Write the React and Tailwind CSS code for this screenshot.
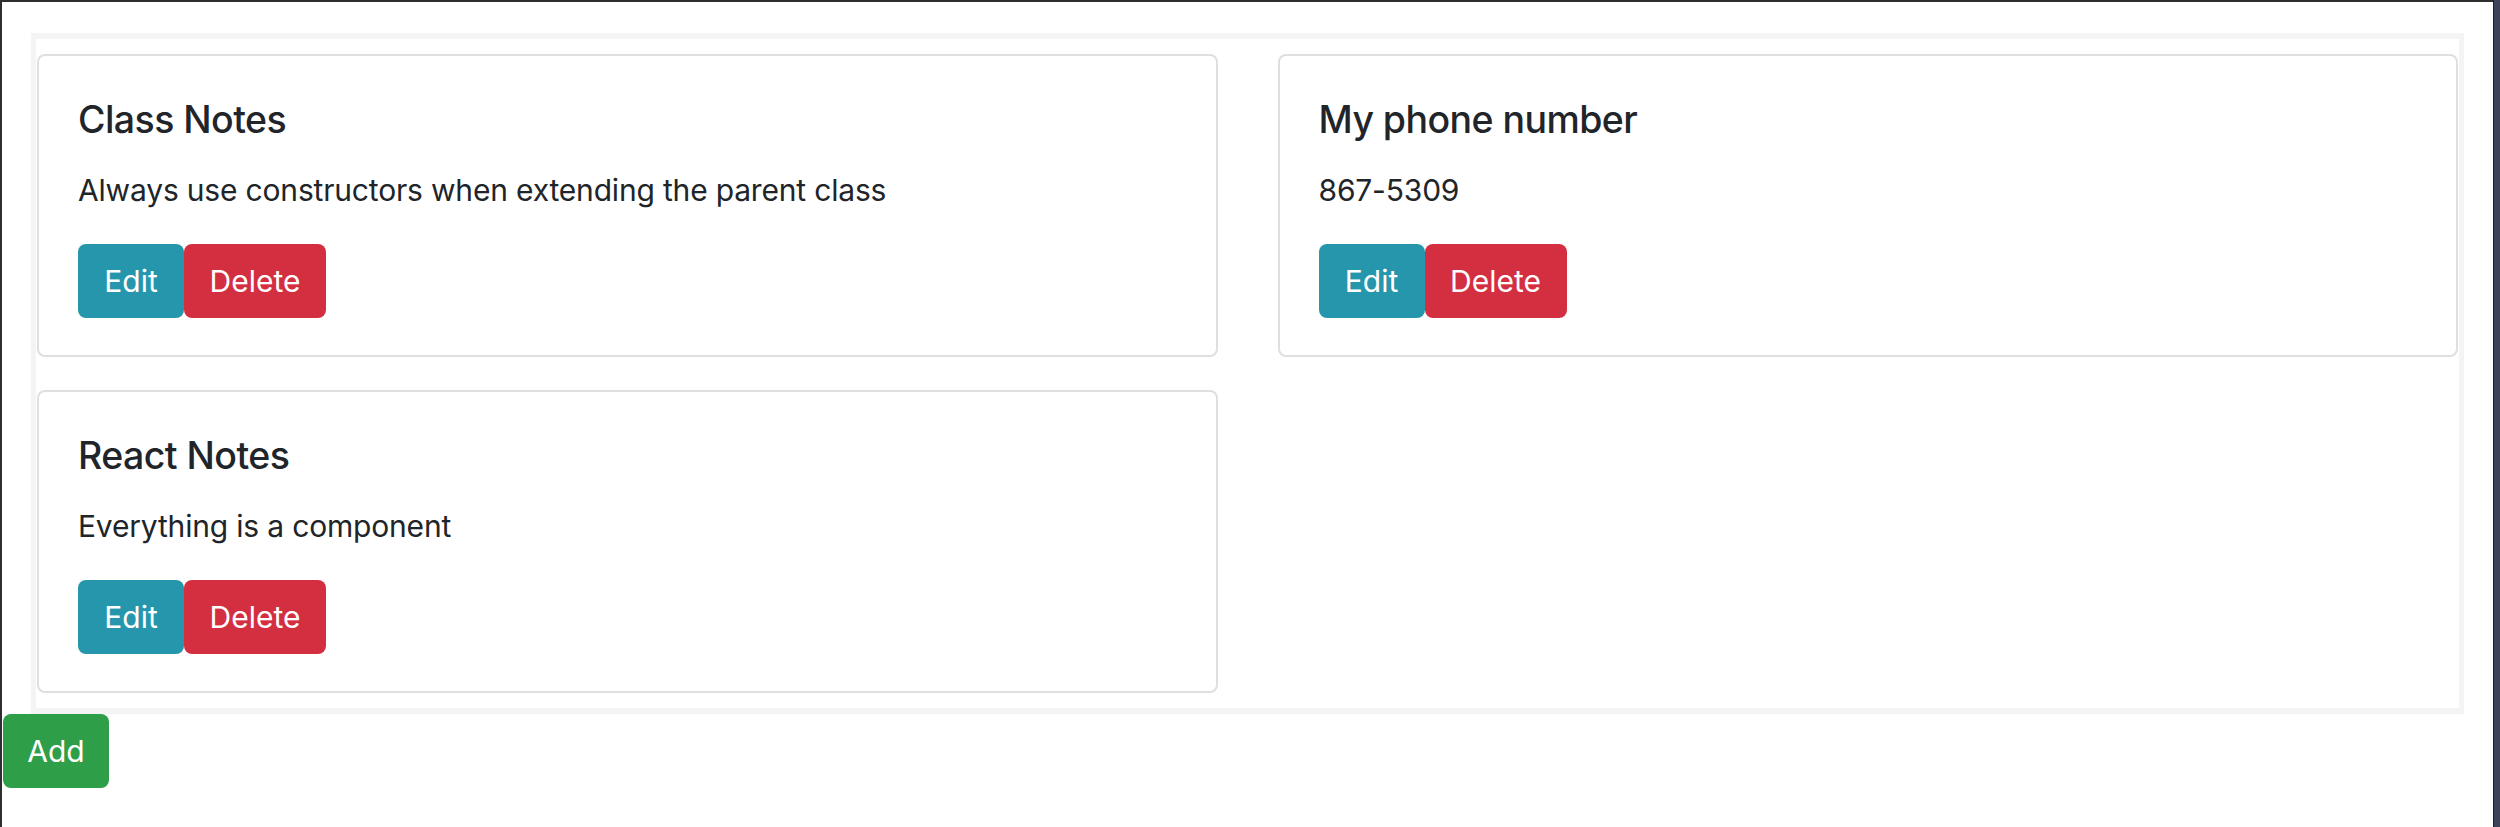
import React from 'react';

const notes = [
  { id: 1, title: 'Class Notes', body: 'Always use constructors when extending the parent class' },
  { id: 2, title: 'My phone number', body: '867-5309' },
  { id: 3, title: 'React Notes', body: 'Everything is a component' },
];

function NoteCard({ note }) {
  return (
    <div className="h-[303px] rounded-[8px] border-2 border-[#dfdfdf] bg-white px-[39px] pt-[41px]">
      <h5 className="text-[37.5px] leading-[1.2] font-medium tracking-[-0.015em] text-[#212529]">{note.title}</h5>
      <p className="mt-[26px] text-[30px] leading-[1.5] tracking-[-0.006em] text-[#212529]">{note.body}</p>
      <div className="mt-[31px] flex">
        <button className="flex h-[74px] w-[106px] items-center justify-center rounded-[8px] bg-[#2596ac] text-[30px] text-white">
          Edit
        </button>
        <button className="flex h-[74px] w-[142px] items-center justify-center rounded-[8px] bg-[#d42e41] text-[30px] text-white">
          Delete
        </button>
      </div>
    </div>
  );
}

export default function App() {
  return (
    <div
      className="flex min-h-screen bg-white"
      style={{ fontFamily: 'Inter, "Noto Sans", sans-serif' }}
    >
      <div className="flex-1 border-t-2 border-l-2 border-[#2e2e2e]">
        {/* Notes list */}
        <div className="mx-[29px] mt-[31px] border-x-[5px] border-y-[6px] border-[#f4f4f5] px-px pt-[15px] pb-[15px]">
          <div className="grid grid-cols-2 gap-x-[60px] gap-y-[33px]">
            {notes.map(note => (
              <NoteCard key={note.id} note={note} />
            ))}
          </div>
        </div>
        <button className="ml-px flex h-[74px] w-[106px] items-center justify-center rounded-[8px] bg-[#2e9e48] text-[30px] text-white">
          Add
        </button>
      </div>
      <div className="w-px bg-[#1f1f1f]" />
      <div className="w-[6px] bg-[#3d4459]" />
    </div>
  );
}
